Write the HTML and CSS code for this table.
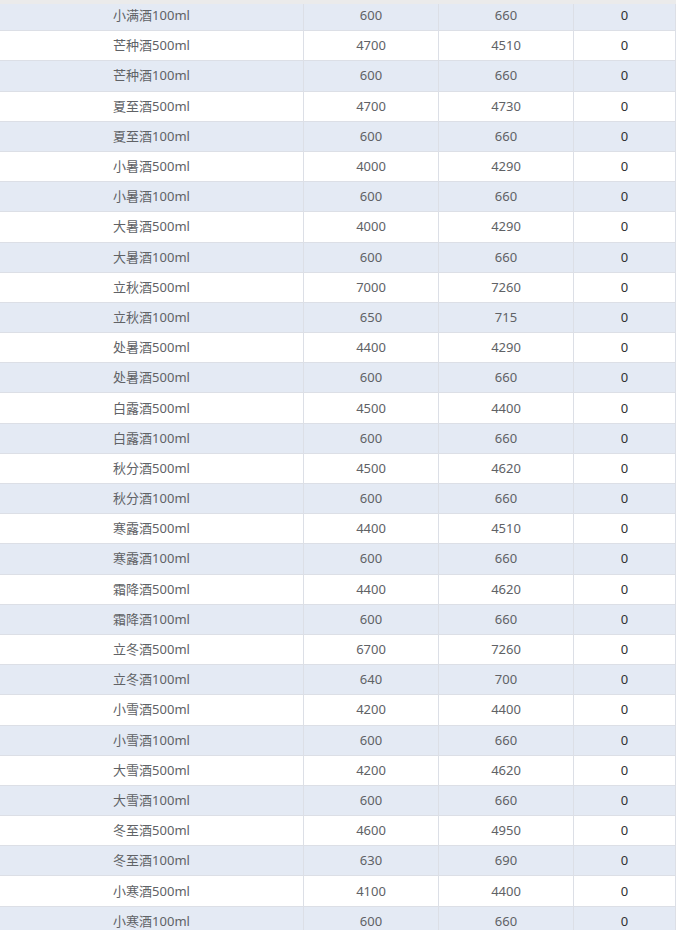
FILE: index.html
```html
<!DOCTYPE html>
<html lang="zh-CN">
<head>
<meta charset="utf-8">
<title>价格表</title>
<link rel="stylesheet" href="styles.css">
</head>
<body>
<div class="table-wrap">
  <div class="top-edge"></div>
  <div class="table-body">
    <div class="row stripe"><div class="cell">小满酒100ml</div><div class="cell">600</div><div class="cell">660</div><div class="cell num">0</div></div>
    <div class="row"><div class="cell">芒种酒500ml</div><div class="cell">4700</div><div class="cell">4510</div><div class="cell num">0</div></div>
    <div class="row stripe"><div class="cell">芒种酒100ml</div><div class="cell">600</div><div class="cell">660</div><div class="cell num">0</div></div>
    <div class="row"><div class="cell">夏至酒500ml</div><div class="cell">4700</div><div class="cell">4730</div><div class="cell num">0</div></div>
    <div class="row stripe"><div class="cell">夏至酒100ml</div><div class="cell">600</div><div class="cell">660</div><div class="cell num">0</div></div>
    <div class="row"><div class="cell">小暑酒500ml</div><div class="cell">4000</div><div class="cell">4290</div><div class="cell num">0</div></div>
    <div class="row stripe"><div class="cell">小暑酒100ml</div><div class="cell">600</div><div class="cell">660</div><div class="cell num">0</div></div>
    <div class="row"><div class="cell">大暑酒500ml</div><div class="cell">4000</div><div class="cell">4290</div><div class="cell num">0</div></div>
    <div class="row stripe"><div class="cell">大暑酒100ml</div><div class="cell">600</div><div class="cell">660</div><div class="cell num">0</div></div>
    <div class="row"><div class="cell">立秋酒500ml</div><div class="cell">7000</div><div class="cell">7260</div><div class="cell num">0</div></div>
    <div class="row stripe"><div class="cell">立秋酒100ml</div><div class="cell">650</div><div class="cell">715</div><div class="cell num">0</div></div>
    <div class="row"><div class="cell">处暑酒500ml</div><div class="cell">4400</div><div class="cell">4290</div><div class="cell num">0</div></div>
    <div class="row stripe"><div class="cell">处暑酒500ml</div><div class="cell">600</div><div class="cell">660</div><div class="cell num">0</div></div>
    <div class="row"><div class="cell">白露酒500ml</div><div class="cell">4500</div><div class="cell">4400</div><div class="cell num">0</div></div>
    <div class="row stripe"><div class="cell">白露酒100ml</div><div class="cell">600</div><div class="cell">660</div><div class="cell num">0</div></div>
    <div class="row"><div class="cell">秋分酒500ml</div><div class="cell">4500</div><div class="cell">4620</div><div class="cell num">0</div></div>
    <div class="row stripe"><div class="cell">秋分酒100ml</div><div class="cell">600</div><div class="cell">660</div><div class="cell num">0</div></div>
    <div class="row"><div class="cell">寒露酒500ml</div><div class="cell">4400</div><div class="cell">4510</div><div class="cell num">0</div></div>
    <div class="row stripe"><div class="cell">寒露酒100ml</div><div class="cell">600</div><div class="cell">660</div><div class="cell num">0</div></div>
    <div class="row"><div class="cell">霜降酒500ml</div><div class="cell">4400</div><div class="cell">4620</div><div class="cell num">0</div></div>
    <div class="row stripe"><div class="cell">霜降酒100ml</div><div class="cell">600</div><div class="cell">660</div><div class="cell num">0</div></div>
    <div class="row"><div class="cell">立冬酒500ml</div><div class="cell">6700</div><div class="cell">7260</div><div class="cell num">0</div></div>
    <div class="row stripe"><div class="cell">立冬酒100ml</div><div class="cell">640</div><div class="cell">700</div><div class="cell num">0</div></div>
    <div class="row"><div class="cell">小雪酒500ml</div><div class="cell">4200</div><div class="cell">4400</div><div class="cell num">0</div></div>
    <div class="row stripe"><div class="cell">小雪酒100ml</div><div class="cell">600</div><div class="cell">660</div><div class="cell num">0</div></div>
    <div class="row"><div class="cell">大雪酒500ml</div><div class="cell">4200</div><div class="cell">4620</div><div class="cell num">0</div></div>
    <div class="row stripe"><div class="cell">大雪酒100ml</div><div class="cell">600</div><div class="cell">660</div><div class="cell num">0</div></div>
    <div class="row"><div class="cell">冬至酒500ml</div><div class="cell">4600</div><div class="cell">4950</div><div class="cell num">0</div></div>
    <div class="row stripe"><div class="cell">冬至酒100ml</div><div class="cell">630</div><div class="cell">690</div><div class="cell num">0</div></div>
    <div class="row"><div class="cell">小寒酒500ml</div><div class="cell">4100</div><div class="cell">4400</div><div class="cell num">0</div></div>
    <div class="row stripe"><div class="cell">小寒酒100ml</div><div class="cell">600</div><div class="cell">660</div><div class="cell num">0</div></div>
  </div>
</div>
</body>
</html>
```
FILE: styles.css
```css
html, body {
  margin: 0;
  padding: 0;
  background: #ffffff;
}

body {
  font-family: "Noto Sans", "Noto Sans CJK SC", sans-serif;
  font-size: 13px;
  color: #606266;
}

.table-wrap {
  position: relative;
  width: 676px;
  height: 930px;
  overflow: hidden;
  background: #ffffff;
}

.top-edge {
  position: absolute;
  left: 0;
  top: 0;
  width: 100%;
  height: 4px;
  background: #ebebeb;
  z-index: 2;
}

.table-body {
  display: flex;
  flex-direction: column;
  padding-top: 1px;
}

.row {
  display: grid;
  grid-template-columns: 304px 135px 135px 102px;
  height: 30.2px;
  box-sizing: border-box;
  border-bottom: 1px solid #dcdfe6;
  background: #ffffff;
}

.row.stripe {
  background: #e4eaf4;
}

.cell {
  display: flex;
  align-items: center;
  justify-content: center;
  border-right: 1px solid #dcdfe6;
  box-sizing: border-box;
  line-height: 1;
  white-space: nowrap;
}

.cell.num {
  color: #303133;
}
```
